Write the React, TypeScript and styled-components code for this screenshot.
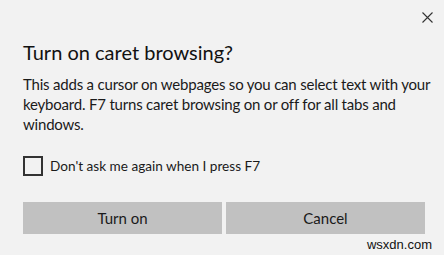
import React from "react";
import styled, { createGlobalStyle } from "styled-components";

const Global = createGlobalStyle`
  html, body {
    margin: 0;
    padding: 0;
    background: #f2f2f2;
  }
`;

const Dialog = styled.div`
  position: relative;
  width: 444px;
  height: 255px;
  box-sizing: border-box;
  padding: 38px 19px 0 23px;
  background: #f2f2f2;
  font-family: Lato, "Noto Sans", sans-serif;
  color: #1a1a1a;
  display: flex;
  flex-direction: column;
`;

const CloseButton = styled.button`
  position: absolute;
  top: 11px;
  right: 10px;
  width: 13px;
  height: 13px;
  padding: 0;
  border: none;
  background: transparent;
  display: flex;
  align-items: center;
  justify-content: center;
`;

const Title = styled.h1`
  margin: 0;
  font-size: 20px;
  font-weight: 400;
  line-height: 28px;
  color: #111;
`;

const Body = styled.p`
  margin: 8px -12px 0 0;
  font-size: 15px;
  letter-spacing: -0.2px;
  line-height: 20px;
  white-space: nowrap;
  color: #1a1a1a;
`;

const CheckRow = styled.label`
  display: flex;
  align-items: center;
  gap: 7px;
  margin-top: 22px;
  font-size: 13.6px;
  color: #1a1a1a;
`;

const Box = styled.span`
  width: 20px;
  height: 20px;
  box-sizing: border-box;
  border: 2px solid #333;
`;

const Buttons = styled.div`
  display: grid;
  grid-template-columns: 1fr 1fr;
  gap: 4px;
  margin-top: 26px;
`;

const Button = styled.button`
  height: 32px;
  border: none;
  background: #c1c1c1;
  font-family: Lato, "Noto Sans", sans-serif;
  font-size: 15px;
  color: #1a1a1a;
  padding: 0;
`;

const Watermark = styled.div`
  position: absolute;
  right: 12px;
  bottom: 3px;
  font-family: "Liberation Sans", Arial, sans-serif;
  font-size: 13px;
  color: #111;
`;

export default function App() {
  return (
    <>
      <Global />
      <Dialog>
        <CloseButton aria-label="Close">
          <svg width="11" height="11" viewBox="0 0 11 11">
            <path d="M0.5 0.5 L10.5 10.5 M10.5 0.5 L0.5 10.5" stroke="#333" strokeWidth="1.1" fill="none" />
          </svg>
        </CloseButton>
        <Title>Turn on caret browsing?</Title>
        <Body>
          This adds a cursor on webpages so you can select text with your
          <br />
          keyboard. F7 turns caret browsing on or off for all tabs and
          <br />
          windows.
        </Body>
        <CheckRow>
          <Box />
          Don't ask me again when I press F7
        </CheckRow>
        <Buttons>
          <Button>Turn on</Button>
          <Button>Cancel</Button>
        </Buttons>
        <Watermark>wsxdn.com</Watermark>
      </Dialog>
    </>
  );
}
